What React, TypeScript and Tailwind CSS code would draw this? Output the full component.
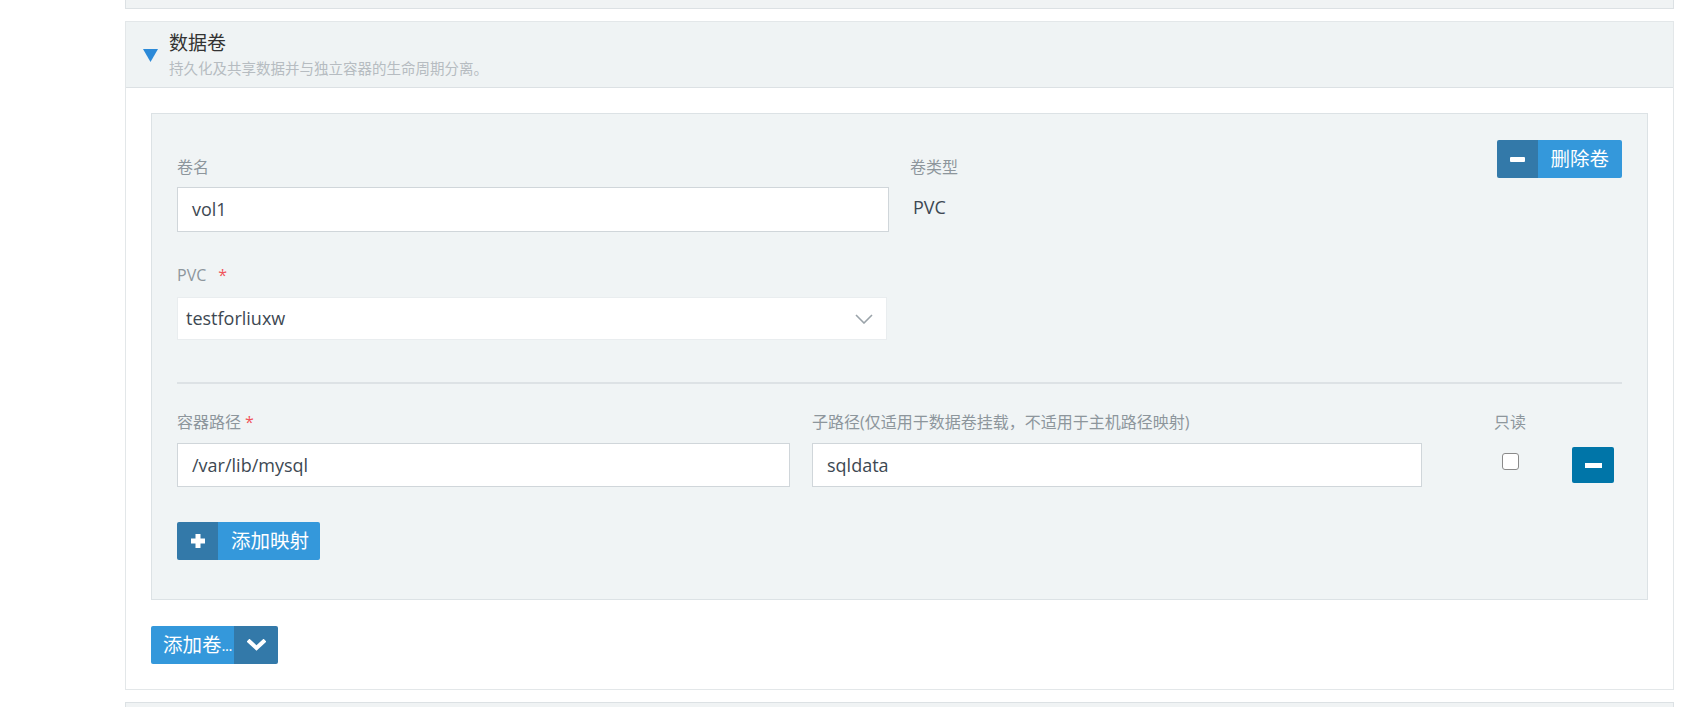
import React from 'react';

const Label: React.FC<{ text: string; required?: boolean; gap?: string }> = ({ text, required, gap = 'ml-1' }) => (
  <div className="h-5 text-[16px] leading-5 text-[#8d969c]">
    {text}
    {required && <span className={`${gap} text-[#f0545b]`}>*</span>}
  </div>
);

const MinusBar = () => <span className="block w-[15px] h-[5px] bg-white rounded-[1px]" />;

const App: React.FC = () => {
  return (
    <div className="min-h-[707px] bg-white font-['Open_Sans','Noto_Sans_CJK_SC',sans-serif] text-[#3d4852]">
      <div className="pl-[125px] pr-[14px]">
        {/* tail of the previous section */}
        <div className="h-[9px] bg-[#f0f3f4] border border-t-0 border-[#dce1e4]" />

        {/* volumes section */}
        <section className="mt-[12px] border border-[#e3e7e9]">
          <header className="h-[66px] flex items-center pl-[17px] bg-[#eff3f4] border-b border-[#dce1e4]">
            <svg width="15" height="13" viewBox="0 0 15 13" className="mt-[2px]">
              <polygon points="0,0 15,0 7.5,13" fill="#2c8ad8" />
            </svg>
            <div className="ml-[11px]">
              <div className="text-[19px] leading-6 text-[#333]">数据卷</div>
              <div className="mt-[4px] text-[14.5px] leading-5 text-[#b6bcc1]">持久化及共享数据并与独立容器的生命周期分离。</div>
            </div>
          </header>

          <div className="px-[25px] pt-[25px] pb-[25px]">
            <div className="bg-[#f0f4f5] border border-[#dce2e5] px-[25px] pt-[26px] pb-[39px]">
              {/* volume name / type / delete */}
              <div className="flex items-start">
                <div className="w-[712px] pt-[17px]">
                  <Label text="卷名" />
                  <div className="mt-[10px] h-[45px] flex items-center px-[14px] bg-white border border-[#d0d6da] text-[18px]">vol1</div>
                  <div className="mt-[33px]">
                    <Label text="PVC" required gap="ml-[12px]" />
                  </div>
                  <div className="mt-[12px] h-[43px] w-[710px] flex items-center justify-between pl-[8px] pr-[13px] bg-white border border-[#e9edef] text-[18px]">
                    <span>testforliuxw</span>
                    <svg width="18" height="10" viewBox="0 0 18 10" fill="none">
                      <polyline points="1,1 9,9 17,1" stroke="#9aa3a9" strokeWidth="1.6" />
                    </svg>
                  </div>
                </div>
                <div className="ml-[21px] pt-[17px]">
                  <Label text="卷类型" />
                  <div className="mt-[18px] pl-[3px] text-[18px] leading-6">PVC</div>
                </div>
                <button className="ml-auto h-[38px] flex items-stretch rounded-[2px] overflow-hidden text-white text-[19.5px]">
                  <span className="w-[41px] flex items-center justify-center bg-[#3379a9]">
                    <MinusBar />
                  </span>
                  <span className="flex items-center pl-[12px] pr-[13px] bg-[#3498db]">删除卷</span>
                </button>
              </div>

              <div className="mt-[42px] h-[2px] bg-[#dde2e5]" />

              {/* mount mapping */}
              <div className="mt-[28px] flex items-start">
                <div className="w-[613px]">
                  <Label text="容器路径" required />
                  <div className="mt-[11px] h-[44px] flex items-center px-[14px] bg-white border border-[#d0d6da] text-[18px]">/var/lib/mysql</div>
                </div>
                <div className="ml-[22px] w-[610px]">
                  <Label text="子路径(仅适用于数据卷挂载，不适用于主机路径映射)" />
                  <div className="mt-[11px] h-[44px] flex items-center px-[14px] bg-white border border-[#d0d6da] text-[18px]">sqldata</div>
                </div>
                <div className="ml-[71px] w-[34px] flex flex-col items-center">
                  <Label text="只读" />
                  <span className="mt-[21px] w-[17px] h-[17px] rounded-[3px] border border-[#8a8a8a] bg-white" />
                </div>
                <button className="ml-auto mr-[8px] mt-[35px] w-[42px] h-[36px] flex items-center justify-center rounded-[2px] bg-[#0075a8]">
                  <span className="block w-[17px] h-[5px] bg-white" />
                </button>
              </div>

              <button className="mt-[35px] h-[38px] flex items-stretch rounded-[2px] overflow-hidden text-white text-[19.5px]">
                <span className="w-[41px] flex items-center justify-center bg-[#3379a9]">
                  <svg width="14" height="14" viewBox="0 0 14 14">
                    <rect x="4.5" y="0" width="5" height="14" fill="white" />
                    <rect x="0" y="4.5" width="14" height="5" fill="white" />
                  </svg>
                </span>
                <span className="flex items-center pl-[13px] pr-[11px] bg-[#3498db]">添加映射</span>
              </button>
            </div>

            <button className="mt-[26px] h-[38px] flex items-stretch rounded-[2px] overflow-hidden text-white text-[19.5px]">
              <span className="w-[83px] flex items-center pl-[12px] bg-[#3498db] whitespace-nowrap">
                添加卷<span className="text-[15px] tracking-[-0.5px]">...</span>
              </span>
              <span className="w-[44px] flex items-center justify-center bg-[#3379a9]">
                <svg width="19" height="12" viewBox="0 0 19 12" fill="none">
                  <polyline points="2.5,2.5 9.5,9 16.5,2.5" stroke="white" strokeWidth="4" strokeLinecap="square" />
                </svg>
              </span>
            </button>
          </div>
        </section>

        {/* head of the next section */}
        <div className="mt-[12px] h-[12px] bg-[#f0f3f4] border border-b-0 border-[#dce1e4]" />
      </div>
    </div>
  );
};

export default App;
